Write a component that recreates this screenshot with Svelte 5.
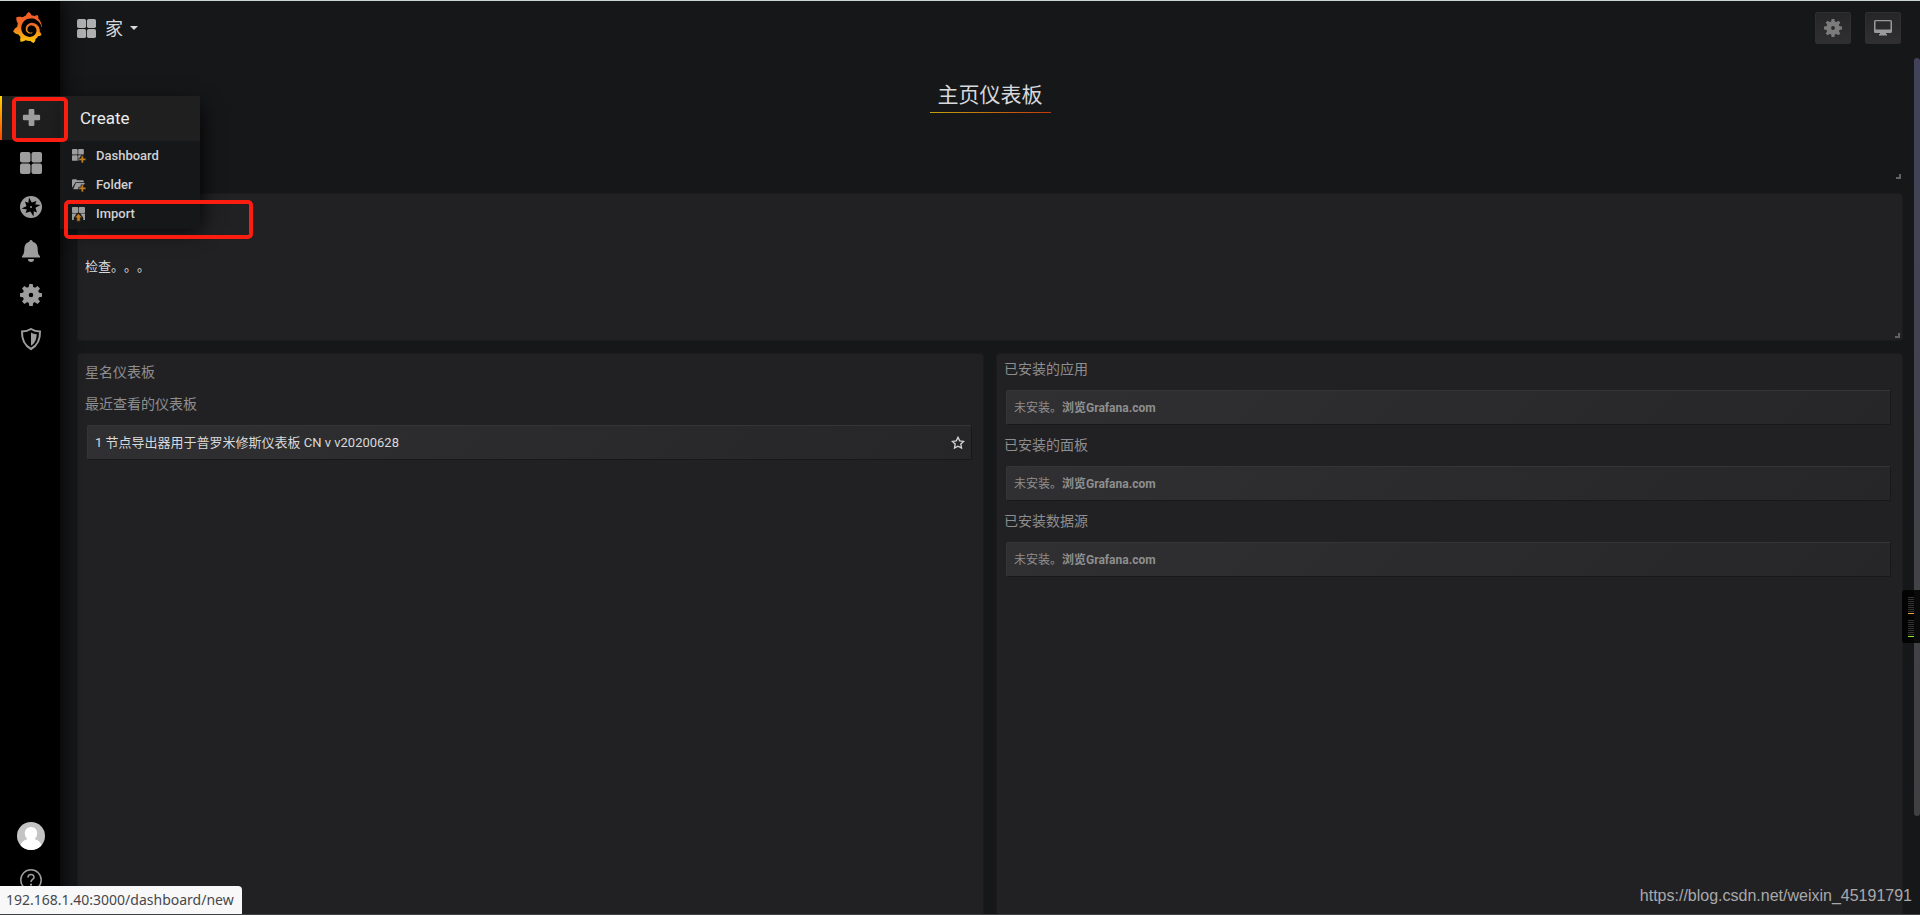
<script>
  let menuItems = [
    { label: 'Dashboard', icon: 'dashboard' },
    { label: 'Folder', icon: 'folder' },
    { label: 'Import', icon: 'import' }
  ];

  let sideItems = [
    { label: 'Dashboards', icon: 'apps' },
    { label: 'Explore', icon: 'compass' },
    { label: 'Alerting', icon: 'bell' },
    { label: 'Configuration', icon: 'gear' },
    { label: 'Server Admin', icon: 'shield' }
  ];

  let plugins = ['已安装的应用', '已安装的面板', '已安装数据源'];

  let teeth = [0, 45, 90, 135, 180, 225, 270, 315];
</script>

<svelte:head>
  <title>Grafana</title>
</svelte:head>

{#snippet icon(name)}
  <svg class="icon" viewBox="0 0 22 22" aria-hidden="true">
    {#if name === 'plus'}
      <rect x="8" y="2" width="6" height="18" rx="1.200" />
      <rect x="2" y="8" width="18" height="6" rx="1.200" />
    {:else if name === 'apps'}
      <rect x="0" y="0" width="10.500" height="10.500" rx="2" />
      <rect x="11.500" y="0" width="10.500" height="10.500" rx="2" />
      <rect x="0" y="11.500" width="10.500" height="10.500" rx="2" />
      <rect x="11.500" y="11.500" width="10.500" height="10.500" rx="2" />
    {:else if name === 'compass'}
      <circle cx="11" cy="11" r="11" />
      <path class="cut" d="M9 1.500l3.500 6.500L20.500 9 14 12.500 13.500 20.500 9.500 14 1.500 12.500 8 9.500z" />
      <path class="cut" d="M5 5.500l4.500 1.700L16.500 5l-1.700 4.500L17 16.500l-4.500-1.700L5.500 17l1.700-4.500z" />
      <circle cx="11" cy="11" r="1" />
    {:else if name === 'bell'}
      <path d="M11 0a1.700 1.700 0 0 1 1.700 1.700c3.400.9 5 3.700 5 7 0 4.300.7 5.500 2.300 7.600v1.200H2v-1.200c1.600-2.100 2.300-3.300 2.300-7.600 0-3.300 1.600-6.100 5-7A1.700 1.700 0 0 1 11 0z" />
      <path d="M8 19h6a3 3 0 0 1-6 0z" />
    {:else if name === 'gear'}
      <circle cx="11" cy="11" r="5.300" fill="none" stroke="currentColor" stroke-width="6" />
      {#each teeth as angle}
        <path d="M8.600 4L9.300 0h3.400l.7 4z" transform="rotate({angle} 11 11)" />
      {/each}
    {:else if name === 'shield'}
      <path d="M11 1c3 1.800 6 2.400 9 2.400.3 8-2 13.800-9 17.600C4 17.200 1.700 11.400 2 3.400c3 0 6-.6 9-2.400z" fill="none" stroke="currentColor" stroke-width="2" />
      <path d="M11 4.500c1.800 1 3.500 1.500 5.700 1.700-.1 5-1.800 9-5.700 11.600z" />
    {:else if name === 'help'}
      <circle cx="11" cy="11" r="10.200" fill="none" stroke="currentColor" stroke-width="1.500" />
      <path d="M8 8.500c0-4 6-4 6-.3 0 2.300-3 2.300-3 4.800" fill="none" stroke="currentColor" stroke-width="1.600" />
      <circle cx="11" cy="15.700" r="1.100" />
    {:else if name === 'dashboard'}
      <rect x="0" y="0" width="9.500" height="9.500" rx="1.500" />
      <rect x="10.500" y="0" width="9.500" height="9.500" rx="1.500" />
      <rect x="0" y="10.500" width="9.500" height="9.500" rx="1.500" />
      <path d="M10.500 10.500H16L12 16v4h-1.500z" />
      <path class="accent" d="M15.500 11.500h4v4h4v4h-4v4h-4v-4h-4v-4h4z" />
    {:else if name === 'folder'}
      <path d="M0 17V4a2 2 0 0 1 2-2h5l2 2h9a2 2 0 0 1 2 2v1H6z" />
      <path d="M6.500 8.500H22L20 12h-5v4h-4v3H2z" />
      <path class="accent" d="M15.500 11.500h4v4h4v4h-4v4h-4v-4h-4v-4h4z" />
    {:else if name === 'import'}
      <rect x="0" y="0" width="10.500" height="10" rx="1.500" />
      <rect x="11.500" y="0" width="10.500" height="10" rx="1.500" />
      <path d="M0 11h8l-5 7v4H0zM14 11h8v11h-3v-4z" />
      <path class="accent" d="M11 11l6.500 7H14v6H8v-6H4.500z" />
    {/if}
  </svg>
{/snippet}

<div class="page">
  <nav class="sidebar">
    <a class="logo" href="/" aria-label="Home">
      <svg viewBox="0 0 24 24" aria-hidden="true">
        <defs>
          <linearGradient id="logo-fill" x1="0" y1="0" x2="0" y2="1">
            <stop offset="0" stop-color="#f05a28" />
            <stop offset="0.4" stop-color="#f26a25" />
            <stop offset="1" stop-color="#fbca0a" />
          </linearGradient>
        </defs>
        <path fill="url(#logo-fill)" d="M23.02 10.59a8.578 8.578 0 0 0-.862-3.034 8.911 8.911 0 0 0-1.789-2.445c.337-1.342-.413-2.505-.413-2.505-1.292-.08-2.113.4-2.416.62-.052-.02-.102-.044-.154-.064-.22-.089-.446-.172-.677-.247-.231-.073-.47-.14-.711-.197a9.867 9.867 0 0 0-.875-.161C14.557.753 12.94 0 12.94 0c-1.804 1.145-2.147 2.744-2.147 2.744l-.018.093c-.098.029-.2.057-.298.088-.138.042-.275.094-.413.143-.138.055-.275.107-.41.166a8.869 8.869 0 0 0-1.557.87l-.063-.029c-2.497-.955-4.716.195-4.716.195-.203 2.658.996 4.33 1.235 4.636a11.608 11.608 0 0 0-.607 2.635C1.636 12.677.953 15.014.953 15.014c1.926 2.214 4.171 2.351 4.171 2.351.003-.002.006-.002.006-.005.285.509.615.994.986 1.446.156.19.32.371.488.548-.704 2.009.099 3.68.099 3.68 2.144.08 3.553-.937 3.849-1.173a9.784 9.784 0 0 0 3.164.501h.08l.055-.003.107-.002.103-.005.003.002c1.01 1.44 2.788 1.646 2.788 1.646 1.264-1.332 1.337-2.653 1.337-2.94v-.058c0-.02-.003-.039-.003-.06.265-.187.52-.387.758-.6a7.875 7.875 0 0 0 1.415-1.7c1.43.083 2.437-.885 2.437-.885-.236-1.49-1.085-2.216-1.264-2.354l-.065-.046c.008-.092.016-.18.02-.27.011-.162.016-.323.016-.48v-.253l-.013-.233-.023-.255-.034-.246a6.215 6.215 0 0 0-2.032-3.73 6.015 6.015 0 0 0-3.222-1.46 6.292 6.292 0 0 0-.85-.048l-.17.002-.148.011a4.777 4.777 0 0 0-3.335 1.695c-.332.4-.592.84-.768 1.297a4.594 4.594 0 0 0-.312 1.817l.016.255a3.615 3.615 0 0 0 .698 1.82 3.53 3.53 0 0 0 1.827 1.282c.33.098.66.14.971.137l.177-.005.161-.013.119-.016a2.634 2.634 0 0 0 1.135-.459l.085-.065a.248.248 0 0 0 .039-.35.244.244 0 0 0-.309-.06l-.078.042c-.09.044-.184.083-.283.116a2.476 2.476 0 0 1-.475.096l-.166.008-.182-.008-.171-.01a2.59 2.59 0 0 1-.724-.213 2.557 2.557 0 0 1-.667-.438 2.52 2.52 0 0 1-.805-1.475 2.306 2.306 0 0 1-.029-.444l.013-.236a3.163 3.163 0 0 1 1.352-2.29 3.12 3.12 0 0 1 .937-.43 2.946 2.946 0 0 1 .776-.101l.271.01a4.041 4.041 0 0 1 1.635.49 3.94 3.94 0 0 1 1.602 1.662 3.77 3.77 0 0 1 .397 1.414l.01.226v.135l-.01.247a6.195 6.195 0 0 1-.08.639 5.1 5.1 0 0 1-.267.927 5.31 5.31 0 0 1-.624 1.13 5.052 5.052 0 0 1-3.237 2.014 4.82 4.82 0 0 1-.649.066l-.326.003a6.607 6.607 0 0 1-1.716-.265 6.776 6.776 0 0 1-3.4-2.274 6.75 6.75 0 0 1-.746-1.15 6.616 6.616 0 0 1-.714-2.596l-.01-.159-.006-.343.003-.163c.008-.22.026-.45.054-.678a8.707 8.707 0 0 1 .28-1.355c.128-.444.286-.872.473-1.277a7.04 7.04 0 0 1 1.456-2.1 5.925 5.925 0 0 1 .953-.763c.169-.111.343-.213.524-.306l.411-.197a7.177 7.177 0 0 1 .714-.267l.589-.162.527-.108.564-.087.52-.048.347-.016a7.999 7.999 0 0 1 1.708.125 7.917 7.917 0 0 1 2.048.68 8.253 8.253 0 0 1 1.672 1.09l.35.314.325.324a8.671 8.671 0 0 1 1.41 1.978l.155.312.135.303a8.848 8.848 0 0 1 .45 1.34.19.19 0 0 0 .201.142.186.186 0 0 0 .172-.184c.01-.246.002-.532-.024-.856z" />
      </svg>
    </a>

    <div class="side-item open">
      <button class="side-link" aria-label="Create">{@render icon('plus')}</button>
      <div class="dropdown">
        <div class="dropdown-title">Create</div>
        <ul>
          {#each menuItems as item}
            <li><a href="/dashboard/new">{@render icon(item.icon)}{item.label}</a></li>
          {/each}
        </ul>
      </div>
      <div class="mark mark-plus"></div>
      <div class="mark mark-import"></div>
    </div>

    <div class="side-list">
      {#each sideItems as item}
        <button class="side-link" aria-label={item.label}>{@render icon(item.icon)}</button>
      {/each}
    </div>

    <div class="side-bottom">
      <button class="side-link" aria-label="Profile">
        <svg class="avatar" viewBox="0 0 28 28" aria-hidden="true">
          <defs><clipPath id="avatar-clip"><circle cx="14" cy="14" r="14" /></clipPath></defs>
          <g clip-path="url(#avatar-clip)">
            <rect width="28" height="28" fill="#c4c4c4" />
            <path fill="#fff" d="M14 5c4 0 6.500 3 6.200 6.500-.2 2.500-1.200 4.300-2.700 5.500 3.500 1 6 3 7 6v5h-21v-5c1-3 3.500-5 7-6-1.500-1.200-2.500-3-2.700-5.500C7.500 8 10 5 14 5z" />
          </g>
        </svg>
      </button>
      <button class="side-link" aria-label="Help">{@render icon('help')}</button>
    </div>
  </nav>

  <main>
    <header class="navbar">
      <button class="nav-title">
        {@render icon('apps')}
        <span>家</span>
        <i class="caret"></i>
      </button>
      <div class="nav-buttons">
        <button aria-label="Dashboard settings">{@render icon('gear')}</button>
        <button aria-label="Cycle view mode">
          <svg class="monitor" viewBox="0 0 18 16" aria-hidden="true">
            <path fill-rule="evenodd" d="M1.500 0h15A1.500 1.500 0 0 1 18 1.500v10a1.500 1.500 0 0 1-1.500 1.500H12v1h1v1.500H5V14h1v-1H1.500A1.500 1.500 0 0 1 0 11.500v-10A1.500 1.500 0 0 1 1.500 0zM1.500 1.300v8.200h15V1.300z" />
          </svg>
        </button>
      </div>
    </header>

    <div class="dashboard">
      <section class="title-panel">
        <h1>主页仪表板</h1>
        <i class="resize"></i>
      </section>

      <section class="panel text-panel">
        <p>检查。。。</p>
        <i class="resize"></i>
      </section>

      <div class="row">
        <section class="panel dash-list">
          <h6>星名仪表板</h6>
          <h6>最近查看的仪表板</h6>
          <a class="item" href="/dashboard">
            <span>1 节点导出器用于普罗米修斯仪表板 CN v v20200628</span>
            <svg class="star" viewBox="0 0 14 14" aria-hidden="true">
              <path d="M7 1.300l1.700 3.600 4 .5-2.900 2.700.7 4L7 10.200l-3.500 1.900.7-4L1.300 5.400l4-.5z" />
            </svg>
          </a>
        </section>

        <section class="panel plugin-list">
          {#each plugins as name}
            <h6>{name}</h6>
            <div class="item">
              <span>未安装。<a href="https://grafana.com">浏览Grafana.com</a></span>
            </div>
          {/each}
        </section>
      </div>
    </div>
  </main>

  <div class="scrollbar"></div>

  <div class="meter">
    <div class="bars orange"></div>
    <div class="bars green"></div>
  </div>

  <div class="status-url">192.168.1.40:3000/dashboard/new</div>
  <div class="watermark">https://blog.csdn.net/weixin_45191791</div>
</div>

<style>
  :global(body) {
    margin: 0;
    background: #161719;
  }

  * {
    box-sizing: border-box;
  }

  .page {
    position: relative;
    display: flex;
    height: 100vh;
    overflow: hidden;
    border-top: 1px solid #ccd6d3;
    border-bottom: 1px solid #414243;
    background: #161719;
    color: #d8d9da;
    font-family: Roboto, "Noto Sans CJK SC", sans-serif;
    font-size: 13px;
    line-height: 20px;
    text-spacing-trim: space-all;
  }

  button {
    padding: 0;
    border: 0;
    background: none;
    color: inherit;
    font: inherit;
    cursor: pointer;
  }

  a {
    color: inherit;
    text-decoration: none;
  }

  .icon {
    display: block;
    width: 22px;
    height: 22px;
    fill: currentColor;
    overflow: visible;
  }

  .cut {
    fill: #000;
  }

  .accent {
    fill: #c17d1d;
    stroke: #161719;
    stroke-width: 1;
  }

  .sidebar {
    position: relative;
    z-index: 2;
    display: flex;
    flex-direction: column;
    flex: none;
    width: 60px;
    background: #000;
    box-shadow: 0 0 20px #000;
    color: #9d9d9e;
  }

  .logo {
    height: 95px;
    padding: 11px 0 0 12px;
  }

  .logo svg {
    display: block;
    width: 31px;
    height: 31px;
  }

  .side-item {
    position: relative;
    height: 45px;
  }

  .side-link {
    display: flex;
    align-items: center;
    justify-content: center;
    width: 100%;
    height: 44px;
    padding-left: 2px;
  }

  .open .side-link {
    background: #1f1f20;
    padding-bottom: 2px;
  }

  .open .side-link .icon {
    width: 21px;
    height: 21px;
  }

  .open::before {
    content: "";
    position: absolute;
    top: 0;
    left: 0;
    width: 2px;
    height: 44px;
    background: linear-gradient(#ffd500, #ff4400);
  }

  .side-bottom {
    margin-top: auto;
    padding-bottom: 12px;
  }

  .avatar {
    width: 28px;
    height: 28px;
  }

  .dropdown {
    position: absolute;
    top: 0;
    left: 60px;
    width: 140px;
    padding-bottom: 1px;
    background: #161719;
    box-shadow: 5px 5px 20px -5px #000;
  }

  .dropdown-title {
    height: 45px;
    padding-left: 20px;
    background: #1f1f20;
    color: #ececec;
    font-size: 17px;
    font-weight: 400;
    line-height: 45px;
  }

  .dropdown ul {
    margin: 0;
    padding: 0;
    list-style: none;
  }

  .dropdown li a {
    display: flex;
    align-items: center;
    gap: 11px;
    height: 29px;
    padding-left: 12px;
    color: #d0d1d2;
    font-weight: 500;
  }

  .dropdown .icon {
    width: 13px;
    height: 13px;
    color: #9d9d9e;
  }

  .mark {
    position: absolute;
    border: 4px solid #fc1d11;
    border-radius: 5px;
    pointer-events: none;
  }

  .mark-plus {
    top: 1px;
    left: 12px;
    width: 56px;
    height: 45px;
  }

  .mark-import {
    top: 104px;
    left: 64px;
    width: 189px;
    height: 39px;
  }

  main {
    display: flex;
    flex-direction: column;
    flex: 1;
    min-width: 0;
    padding: 0 17px;
  }

  .navbar {
    display: flex;
    align-items: center;
    justify-content: space-between;
    height: 54px;
    padding-right: 2px;
  }

  .nav-title {
    display: flex;
    align-items: center;
    gap: 9px;
    font-size: 18px;
    line-height: 27px;
  }

  .nav-title .icon {
    width: 19px;
    height: 19px;
    color: #afafb0;
  }

  .nav-title .caret {
    margin-left: -2px;
  }

  .caret {
    border: 4px solid transparent;
    border-top-color: #d8d9da;
    border-bottom: 0;
  }

  .nav-buttons {
    display: flex;
    gap: 14px;
  }

  .nav-buttons button {
    display: flex;
    align-items: center;
    justify-content: center;
    width: 36px;
    height: 32px;
    border: 1px solid #2f2f32;
    border-radius: 2px;
    background: linear-gradient(#262628, #303032);
    color: #7b7b7c;
  }

  .nav-buttons .icon {
    width: 18px;
    height: 18px;
  }

  .monitor {
    width: 18px;
    height: 16px;
    fill: #9a9a9b;
  }

  .dashboard {
    display: flex;
    flex-direction: column;
    flex: 1;
    gap: 12px;
  }

  .title-panel {
    position: relative;
    height: 126px;
    padding-top: 24px;
    text-align: center;
  }

  h1 {
    display: inline-block;
    margin: 0;
    padding: 0 8px;
    border-bottom: 1px solid;
    border-image: linear-gradient(90deg, #c1a30c, #c23a0c) 1;
    font-size: 21px;
    font-weight: 400;
    line-height: 33px;
  }

  .panel {
    position: relative;
    border: 1px solid #1b1b1d;
    border-radius: 3px;
    background: #212124;
  }

  .text-panel {
    height: 148px;
    padding: 63px 7px 0;
  }

  p {
    margin: 0;
  }

  .resize {
    position: absolute;
    right: 2px;
    bottom: 2px;
    width: 5px;
    height: 5px;
    border: solid #626263;
    border-width: 0 2px 2px 0;
  }

  .row {
    display: grid;
    grid-template-columns: 1fr 1fr;
    gap: 12px;
    flex: 1;
  }

  .row .panel {
    padding: 0 7px;
    border-bottom: 0;
    border-radius: 3px 3px 0 0;
  }

  h6 {
    margin: 0;
    color: #8e8e8e;
    font-size: 14px;
    font-weight: 400;
    line-height: 32px;
  }

  .row .dash-list {
    padding-top: 2px;
  }

  .dash-list .item {
    margin-top: 5px;
  }

  .item {
    display: flex;
    align-items: center;
    justify-content: space-between;
    height: 35px;
    margin: 0 4px 0 2px;
    padding: 0 6px 0 7px;
    border: 1px solid;
    border-color: #353537 #18181a #18181a #353537;
    border-radius: 2px;
    background: linear-gradient(135deg, #303032, #262628);
  }

  .star {
    width: 14px;
    height: 14px;
    fill: none;
    stroke: #d8d9da;
    stroke-width: 1.300;
  }

  .plugin-list h6 {
    padding-bottom: 6px;
    line-height: 30px;
  }

  .plugin-list .item {
    margin-bottom: 5px;
    color: #8e8e8e;
    font-size: 12px;
  }

  .plugin-list .item a {
    font-weight: 700;
  }

  .scrollbar {
    position: absolute;
    top: 57px;
    right: 0;
    width: 6px;
    height: 83%;
    border-radius: 3px;
    background: linear-gradient(#42435a, #424246 75%, #404043);
  }

  .meter {
    position: absolute;
    top: 589px;
    right: 0;
    width: 18px;
    height: 53px;
    padding: 7px 6px;
    border-radius: 3px 0 0 3px;
    background: rgba(0, 0, 0, 0.85);
  }

  .bars {
    width: 6px;
    height: 17px;
    margin-bottom: 6px;
    border-bottom: 1px solid;
    background: repeating-linear-gradient(#343435 0 1px, transparent 1px 2px);
  }

  .orange {
    color: #eca439;
  }

  .green {
    color: #8fee22;
  }

  .status-url {
    position: absolute;
    z-index: 3;
    bottom: 0;
    left: 0;
    height: 28px;
    padding: 0 8px 0 6px;
    border-radius: 0 4px 0 0;
    background: #f8f8f8;
    color: #46484c;
    font-family: "Noto Sans", sans-serif;
    font-size: 14px;
    line-height: 28px;
  }

  .watermark {
    position: absolute;
    right: 8px;
    bottom: 8px;
    color: #a9a9aa;
    font-family: "Liberation Sans", sans-serif;
    font-size: 16px;
  }
</style>
